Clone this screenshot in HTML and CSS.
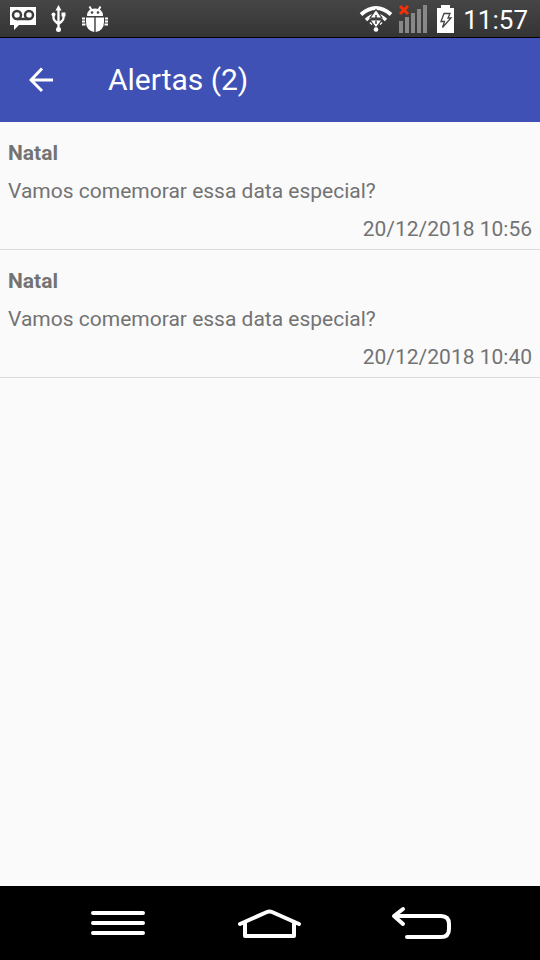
FILE: index.html
```html
<!DOCTYPE html>
<html lang="pt-BR">
<head>
<meta charset="utf-8">
<meta name="viewport" content="width=device-width, initial-scale=1">
<title>Alertas</title>
<link rel="stylesheet" href="styles.css">
</head>
<body>
<div class="status-bar">
  <div class="status-group status-group-left">
    <svg width="26" height="37" viewBox="0 0 26 37" fill="none" aria-hidden="true">
      <path d="M0 7H26V25H9L4 30V25H0Z" fill="#fff"/>
      <circle cx="7" cy="15" r="4" stroke="#3c3c3c" stroke-width="2.500"/>
      <circle cx="19" cy="15" r="4" stroke="#3c3c3c" stroke-width="2.500"/>
      <path d="M7 19H19" stroke="#3c3c3c" stroke-width="2.500"/>
    </svg>
    <svg width="16" height="37" viewBox="0 0 16 37" fill="none" aria-hidden="true">
      <path d="M7.500 9V29M2.500 15V18Q2.500 20 4.500 21.500L7.500 24M12.500 14V18Q12.500 20 10.500 21.500L7.500 24" stroke="#fff" stroke-width="2.300"/>
      <path d="M7.500 5L10.500 10.500H4.500Z" fill="#fff"/>
      <circle cx="2.500" cy="14.500" r="2" fill="#fff"/>
      <path d="M10.500 12.500H14.500V16.500H10.500Z" fill="#fff"/>
      <circle cx="7.500" cy="29.500" r="2.500" fill="#fff"/>
    </svg>
    <svg width="26" height="37" viewBox="0 0 26 37" fill="none" aria-hidden="true">
      <path d="M5 16Q5 8.500 13 8.500Q21 8.500 21 16Z" fill="#fff"/>
      <path d="M7.500 6.500L9.500 10M18.500 6.500L16.500 10" stroke="#fff" stroke-width="2"/>
      <circle cx="10" cy="12.500" r="1.300" fill="#444"/>
      <circle cx="16" cy="12.500" r="1.300" fill="#444"/>
      <path d="M4 17.500H12.300V32Q4 30.500 4 22ZM13.700 17.500H22V22Q22 30.500 13.700 32Z" fill="#fff"/>
      <path d="M0 18.500H3M0 21.500H3M0 24.500H3.500M23 18.500H26M23 21.500H26M22.500 24.500H26" stroke="#fff" stroke-width="1.800"/>
    </svg>
  </div>
  <div class="status-group status-group-right">
    <svg width="34" height="37" viewBox="0 0 34 37" fill="none" aria-hidden="true">
      <path d="M2 14.500Q17 1.500 32 14.500" stroke="#fff" stroke-width="4"/>
      <path d="M7 20Q17 10.500 27 20" stroke="#fff" stroke-width="3.500"/>
      <path d="M11.500 24Q17 18.500 22.500 24" stroke="#fff" stroke-width="3"/>
      <path d="M17 9.500L23 18H11ZM11 20H23L17 28Z" fill="#fff" stroke="#404040" stroke-width="1.200"/>
      <path d="M14 19H20M17 15V18M17 21V24" stroke="#404040" stroke-width="1.500"/>
      <circle cx="17" cy="29.500" r="2.300" fill="#fff"/>
    </svg>
    <svg width="30" height="37" viewBox="0 0 30 37" fill="none" aria-hidden="true">
      <path d="M2 21H6V33H2ZM8 17H12V33H8ZM14 13H18V33H14ZM20 9H24V33H20ZM26 5H30V33H26Z" fill="#888"/>
      <path d="M3 6L11 14M11 6L3 14" stroke="#f5310c" stroke-width="3"/>
    </svg>
    <svg class="battery" width="18" height="37" viewBox="0 0 18 37" fill="none" aria-hidden="true">
      <path d="M4 5H13V8H17V33H0V8H4Z" fill="#fff"/>
      <path d="M7 13.500H13L11 18H14L5.500 27.500L7.500 21.500H4Z" stroke="#444" stroke-width="1.300"/>
    </svg>
    <time class="clock">11:57</time>
  </div>
</div>
<header class="app-bar">
  <button class="icon-button up-button" type="button" aria-label="Voltar">
    <svg width="26" height="26" viewBox="0 0 26 26" fill="none" stroke="#fff" stroke-width="3" aria-hidden="true">
      <path d="M24 13H3M13 1.500L2 13L13 24"/>
    </svg>
  </button>
  <h1 class="title">Alertas (2)</h1>
</header>
<main class="content">
  <ul class="alerts">
    <li class="alert">
      <h2 class="alert-title">Natal</h2>
      <p class="alert-text">Vamos comemorar essa data especial?</p>
      <time class="alert-date" datetime="2018-12-20T10:56">20/12/2018 10:56</time>
    </li>
    <li class="alert">
      <h2 class="alert-title">Natal</h2>
      <p class="alert-text">Vamos comemorar essa data especial?</p>
      <time class="alert-date" datetime="2018-12-20T10:40">20/12/2018 10:40</time>
    </li>
  </ul>
</main>
<nav class="nav-bar">
  <button class="icon-button" type="button" aria-label="Menu">
    <svg width="54" height="34" viewBox="0 0 54 34" fill="none" stroke="#fff" stroke-width="4" stroke-linecap="round" aria-hidden="true">
      <path d="M2 7H52M2 17H52M2 27H52"/>
    </svg>
  </button>
  <button class="icon-button" type="button" aria-label="Início">
    <svg width="64" height="34" viewBox="0 0 64 34" fill="none" stroke="#fff" stroke-width="4" stroke-linecap="round" stroke-linejoin="round" aria-hidden="true">
      <path d="M2 18L29 6Q31.500 5 34 6L61 18M7 17V30H56V17"/>
    </svg>
  </button>
  <button class="icon-button" type="button" aria-label="Voltar">
    <svg width="62" height="34" viewBox="0 0 62 34" fill="none" stroke="#fff" stroke-width="4" stroke-linecap="round" stroke-linejoin="round" aria-hidden="true">
      <path d="M12 3L3 10L12 18M4 10H50Q58 10 58 18V23Q58 31 50 31H16"/>
    </svg>
  </button>
</nav>
</body>
</html>
```
FILE: styles.css
```css
* {
  box-sizing: border-box;
}

body {
  display: flex;
  flex-direction: column;
  min-height: 100vh;
  margin: 0;
  background: #fafafa;
  color: #737373;
  font-family: Roboto, "Noto Sans", sans-serif;
  font-size: 21px;
}

svg {
  display: block;
}

.status-bar {
  display: flex;
  justify-content: space-between;
  padding: 0 12px 0 10px;
  border-bottom: 1px solid #000;
  background: linear-gradient(#464646, #343434);
  color: #fff;
}

.status-group {
  display: flex;
  height: 37px;
}

.status-group-left {
  gap: 15px;
}

.status-group-right {
  gap: 4px;
}

.battery {
  margin-left: 6px;
}

.clock {
  margin-left: 4px;
  font-size: 26px;
  line-height: 40px;
}

.app-bar {
  display: flex;
  align-items: center;
  min-height: 84px;
  background: #3f51b5;
  color: #fff;
}

.icon-button {
  display: flex;
  align-items: center;
  justify-content: center;
  padding: 0;
  border: 0;
  background: none;
}

.up-button {
  width: 84px;
  height: 84px;
}

.title {
  margin: 0 0 0 24px;
  font-size: 30px;
  font-weight: 400;
  line-height: 40px;
}

.content {
  flex: 1;
}

.alerts {
  margin: 0;
  padding: 0;
  list-style: none;
}

.alert {
  padding: 12px 8px 1px;
  border-bottom: 1px solid #dcdcdc;
  line-height: 38px;
}

.alert-title,
.alert-text {
  margin: 0;
  font-size: 21px;
}

.alert-date {
  display: block;
  text-align: right;
}

.nav-bar {
  display: grid;
  grid-template-columns: repeat(3, 1fr);
  min-height: 74px;
  padding: 0 42px;
  background: #000;
}
```
